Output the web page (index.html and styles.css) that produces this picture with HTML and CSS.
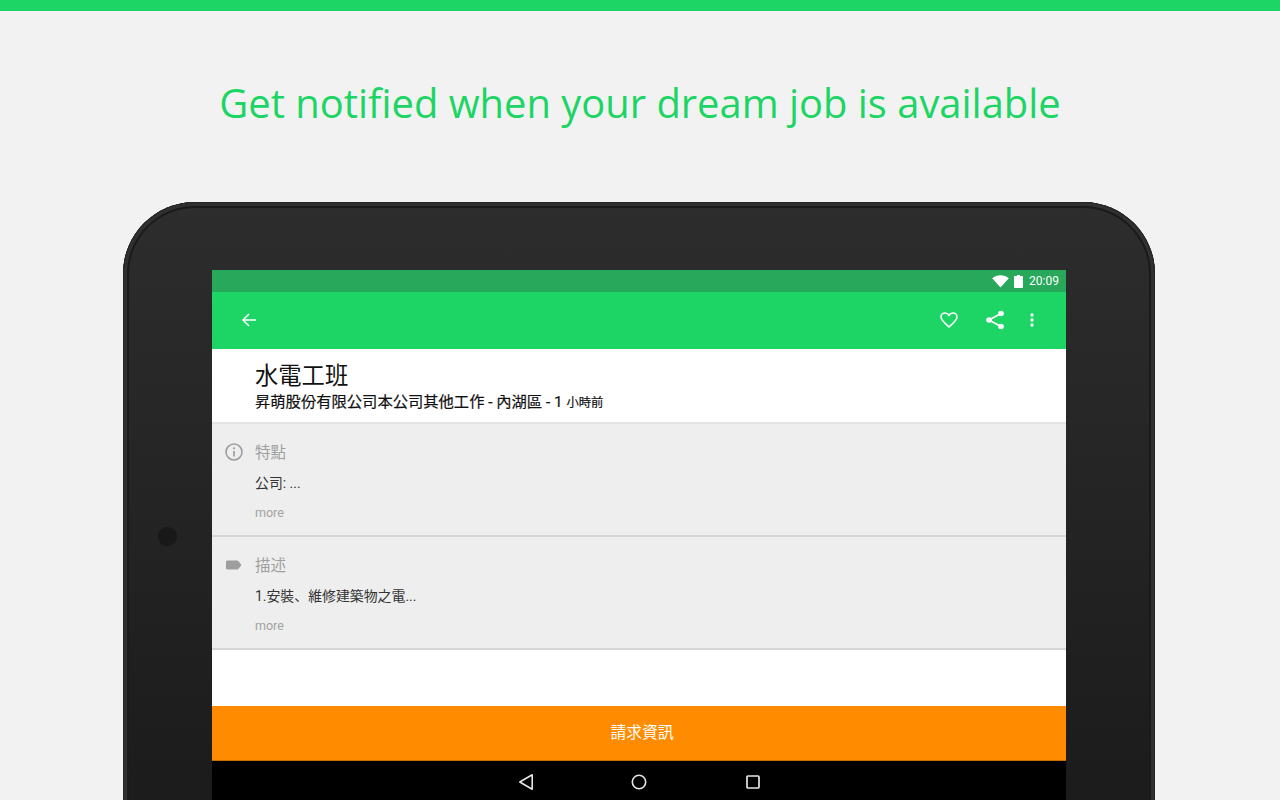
FILE: index.html

```html
<!DOCTYPE html>
<html lang="en">
<head>
    <meta charset="UTF-8">
    <title>Get notified when your dream job is available</title>
    <link rel="stylesheet" href="styles.css">
</head>
<body>
    <div class="top-bar"></div>
    <h1 class="headline">Get notified when your dream job is available</h1>
    <div class="stage">
        <div class="tablet">
            <div class="camera"></div>
            <div class="screen">
                <div class="status-bar">
                    <svg class="wifi" width="17" height="13" viewBox="0 0 17 13"><path d="M8.5 12.6 0.2 3.2C2.4 1.3 5.3 0.2 8.5 0.2s6.1 1.1 8.3 3z" fill="#fff"/></svg>
                    <svg class="battery" width="9" height="13" viewBox="0 0 9 13"><path d="M3 0h3v1h2.2c.4 0 .8.4.8.8v10.4c0 .4-.4.8-.8.8H.8c-.4 0-.8-.4-.8-.8V1.800C0 1.400.4 1 .8 1H3z" fill="#fff"/></svg>
                    <span class="clock">20:09</span>
                </div>
                <div class="toolbar">
                    <svg class="back" width="16" height="16" viewBox="0 0 16 16"><path d="M15 8H2M8 2 2 8l6 6" fill="none" stroke="#fff" stroke-width="1.600"/></svg>
                    <div class="actions">
                        <svg class="heart" width="18" height="16" viewBox="0 0 18 16"><path d="M9 15C4 10.500 1 8 1 5a4 4 0 0 1 4-4c1.600 0 3.100.8 4 2.200C9.900 1.800 11.400 1 13 1a4 4 0 0 1 4 4c0 3-3 5.500-8 10z" fill="none" stroke="#fff" stroke-width="1.600"/></svg>
                        <svg class="share" width="18" height="20" viewBox="0 0 18 20"><path d="M15 3.500 3 10l12 6.500" fill="none" stroke="#fff" stroke-width="1.800"/><circle cx="15" cy="3.500" r="2.800" fill="#fff"/><circle cx="3" cy="10" r="2.800" fill="#fff"/><circle cx="15" cy="16.500" r="2.800" fill="#fff"/></svg>
                        <svg class="more-icon" width="4" height="14" viewBox="0 0 4 14"><circle cx="2" cy="2" r="1.700" fill="#fff"/><circle cx="2" cy="7" r="1.700" fill="#fff"/><circle cx="2" cy="12" r="1.700" fill="#fff"/></svg>
                    </div>
                </div>
                <div class="job-head">
                    <div class="job-title">水電工班</div>
                    <div class="job-sub">昇萌股份有限公司本公司其他工作 - 內湖區 - 1 <small>小時前</small></div>
                </div>
                <div class="section">
                    <svg class="section-icon" width="20" height="20" viewBox="0 0 20 20"><circle cx="10" cy="10" r="8" fill="none" stroke="#9e9e9e" stroke-width="1.600"/><path d="M10 9v5.500" stroke="#9e9e9e" stroke-width="1.700"/><circle cx="10" cy="6.300" r="1.100" fill="#9e9e9e"/></svg>
                    <div class="section-name">特點</div>
                    <div class="section-text">公司: ...</div>
                    <div class="section-more">more</div>
                </div>
                <div class="section">
                    <svg class="section-icon" width="20" height="20" viewBox="0 0 20 20"><path d="M3.500 5.500h9.500c.5 0 1 .2 1.300.6l3.200 3.900-3.200 3.900c-.3.4-.8.6-1.300.6H3.500c-.9 0-1.500-.6-1.500-1.500V7c0-.9.600-1.500 1.500-1.500z" fill="#9e9e9e"/></svg>
                    <div class="section-name">描述</div>
                    <div class="section-text">1.安裝、維修建築物之電...</div>
                    <div class="section-more">more</div>
                </div>
                <div class="blank"></div>
                <div class="request">請求資訊</div>
                <div class="nav-bar">
                    <svg width="16" height="18" viewBox="0 0 16 18"><path d="M14.200 1.800v14.400L1.800 9z" fill="none" stroke="#e6e6e6" stroke-width="1.600" stroke-linejoin="round"/></svg>
                    <svg width="16" height="16" viewBox="0 0 16 16"><circle cx="8" cy="8" r="6.700" fill="none" stroke="#e6e6e6" stroke-width="1.600"/></svg>
                    <svg width="14" height="14" viewBox="0 0 14 14"><rect x="1" y="1" width="12" height="12" rx="1" fill="none" stroke="#e6e6e6" stroke-width="1.700"/></svg>
                </div>
            </div>
        </div>
    </div>
</body>
</html>
```

FILE: styles.css

```css
html, body {
    margin: 0;
    height: 800px;
    overflow: hidden;
}
body {
    background-color: #f2f2f2;
    font-family: Roboto, "Noto Sans CJK JP", sans-serif;
}
.top-bar {
    height: 11px;
    background-color: #1cd564;
}
.headline {
    margin: 0;
    height: 191px;
    padding-top: 63px;
    box-sizing: border-box;
    text-align: center;
    font-family: "Open Sans", sans-serif;
    font-size: 39.900px;
    line-height: 57px;
    font-weight: 400;
    color: #1cd564;
}
.stage {
    height: 598px;
    overflow: hidden;
}
.tablet {
    position: relative;
    box-sizing: border-box;
    width: 1032px;
    height: 640px;
    margin-left: 123px;
    padding: 68px 89px 0;
    border-radius: 72px 72px 0 0;
    background: linear-gradient(#2d2d2d, #1c1c1c 90%);
    box-shadow: inset 0 0 0 1px #252525, inset 0 0 0 4px #303030, inset 0 0 0 6px #1a1a1a;
}
.camera {
    position: absolute;
    left: 35px;
    top: 325px;
    width: 19px;
    height: 19px;
    border-radius: 50%;
    background-color: #181818;
}
.screen {
    width: 854px;
    background-color: #fff;
}
.status-bar {
    display: flex;
    align-items: center;
    justify-content: flex-end;
    height: 22px;
    padding-right: 7px;
    background-color: #27a85a;
    color: #fff;
}
.wifi {
    margin-right: 5px;
}
.battery {
    margin-right: 6px;
}
.clock {
    font-size: 12px;
}
.toolbar {
    display: flex;
    align-items: center;
    justify-content: space-between;
    box-sizing: border-box;
    height: 57px;
    padding: 0 32px 2px 29px;
    background-color: #1cd564;
}
.actions {
    display: flex;
    align-items: center;
}
.heart {
    margin-right: 28px;
}
.share {
    margin-right: 26px;
}
.job-head {
    box-sizing: border-box;
    height: 75px;
    padding: 12px 0 0 43px;
    border-bottom: 2px solid #e4e4e4;
}
.job-title {
    font-size: 23.300px;
    line-height: 30px;
    color: #111;
}
.job-sub {
    margin-top: 1px;
    font-size: 15.300px;
    line-height: 20px;
    color: #111;
    -webkit-text-stroke: 0.2px #111;
}
.job-sub small {
    font-size: 12.300px;
}
.section {
    position: relative;
    box-sizing: border-box;
    height: 113px;
    padding: 19px 0 0 43px;
    background-color: #eeeeee;
    border-bottom: 2px solid #d6d6d6;
}
.section-icon {
    position: absolute;
    left: 12px;
    top: 18px;
}
.section-name {
    font-size: 15.500px;
    line-height: 21px;
    color: #9e9e9e;
}
.section-text {
    margin-top: 9px;
    font-size: 13.900px;
    line-height: 20px;
    color: #333;
}
.section-more {
    margin-top: 11px;
    font-size: 12.500px;
    line-height: 18px;
    color: #a3a3a3;
}
.blank {
    height: 56px;
    background-color: #fff;
}
.request {
    box-sizing: border-box;
    height: 55px;
    padding-left: 6px;
    line-height: 54px;
    text-align: center;
    font-size: 15.800px;
    color: #fff;
    background-color: #ff8c00;
    border-bottom: 1px solid #c96e00;
}
.nav-bar {
    display: grid;
    grid-template-columns: 113.500px 113.500px 113.500px;
    justify-content: center;
    justify-items: center;
    align-items: center;
    box-sizing: border-box;
    height: 39px;
    padding-top: 3px;
    background-color: #000;
}
```
